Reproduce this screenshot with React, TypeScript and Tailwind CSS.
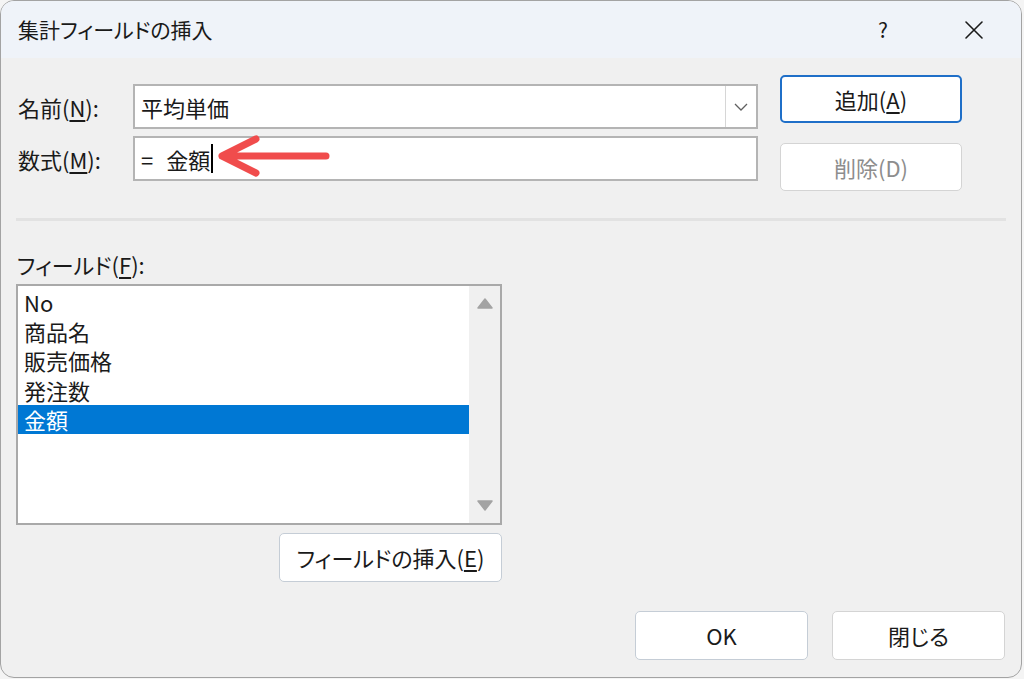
import React from "react";

const font = { fontFamily: '"Noto Sans CJK JP", "Noto Sans", sans-serif' };

function Btn({
  children,
  className = "",
}: {
  children: React.ReactNode;
  className?: string;
}) {
  return (
    <div
      className={
        "flex items-center justify-center bg-white rounded-[5px] text-[22px] text-[#1a1a1a] " +
        className
      }
    >
      {children}
    </div>
  );
}

export default function App() {
  const items = ["No", "商品名", "販売価格", "発注数", "金額"];
  return (
    <div
      className="w-[1024px] h-[679px] bg-[#f4f4f4] relative overflow-hidden [font-feature-settings:'palt']"
      style={font}
    >
      <div className="w-[1022px] h-[678px] border border-[#a3a3a3] rounded-[14px] overflow-hidden bg-[#f0f0f0] flex flex-col">
        {/* Title bar */}
        <div className="h-[57px] bg-[#eff3f9] flex items-center pl-[17px] pr-[37px] shrink-0">
          <div className="text-[21px] text-[#1a1a1a] leading-none">
            集計フィールドの挿入
          </div>
          <div className="ml-auto flex items-center">
            <span className="text-[21px] text-[#1a1a1a] leading-none mr-[76px]">
              ?
            </span>
            <svg width="20" height="20" viewBox="0 0 20 20">
              <path
                d="M2 2 L18 18 M18 2 L2 18"
                stroke="#1a1a1a"
                strokeWidth="1.6"
                strokeLinecap="round"
              />
            </svg>
          </div>
        </div>

        {/* Body */}
        <div className="flex-1 flex flex-col text-[#1a1a1a]">
          <div className="flex pl-[17px] pt-[17px]">
            <div className="flex flex-col gap-[7px] mt-[9px]">
              <div className="flex items-center">
                <div className="w-[115px] text-[22px] leading-none">
                  名前(<span className="underline underline-offset-[3px]">N</span>):
                </div>
                <div className="w-[625px] h-[45px] bg-white border-2 border-[#b4b4b4] flex items-center">
                  <div className="flex-1 pl-[6px] text-[22px] leading-none">
                    平均単価
                  </div>
                  <div className="w-[31px] h-full border-l border-[#d6d6d6] flex items-center justify-center">
                    <svg width="14" height="8" viewBox="0 0 14 8">
                      <path
                        d="M1 1 L7 7 L13 1"
                        stroke="#606060"
                        strokeWidth="1.3"
                        fill="none"
                      />
                    </svg>
                  </div>
                </div>
              </div>
              <div className="flex items-center">
                <div className="w-[115px] text-[22px] leading-none">
                  数式(<span className="underline underline-offset-[3px]">M</span>):
                </div>
                <div className="w-[625px] h-[45px] bg-white border-2 border-[#b4b4b4] flex items-center">
                  <div className="pl-[6px] text-[22px] leading-none flex items-center">
                    <span>=</span>
                    <span className="ml-[13px]">金額</span>
                    <span className="inline-block w-[1.5px] h-[29px] bg-black ml-[1px]"></span>
                  </div>
                </div>
              </div>
            </div>
            <div className="flex flex-col gap-[20px] ml-[22px]">
              <Btn className="w-[182px] h-[48px] border-2 border-[#1f6fc8]">
                追加(<span className="underline underline-offset-[3px]">A</span>)
              </Btn>
              <Btn className="w-[182px] h-[48px] border border-[#d4d4d4] !text-[#8d8d8d]">
                削除(D)
              </Btn>
            </div>
          </div>

          <div className="mx-[15px] mt-[27px] h-[3px] bg-[#e2e2e2]"></div>

          <div className="pl-[16px] mt-[32px] text-[22px] leading-none">
            フィールド(<span className="underline underline-offset-[3px]">F</span>):
          </div>

          <div className="ml-[15px] mt-[9px] w-[486px] h-[241px] bg-white border-2 border-[#a9a9a9] flex">
            <div className="flex-1 pt-[1px]">
              {items.map((it, i) => (
                <div
                  key={it}
                  className={
                    "h-[29.4px] flex items-center pl-[6px] text-[22px] leading-none " +
                    (i === 4 ? "bg-[#0078d4] text-white" : "")
                  }
                >
                  {it}
                </div>
              ))}
            </div>
            <div className="w-[31px] bg-[#f0f0f0] flex flex-col items-center justify-between pt-[12px] pb-[12px]">
              <svg width="16" height="11" viewBox="0 0 16 11">
                <path d="M8 1 L15 10 L1 10 Z" fill="#a3a3a3" stroke="#a3a3a3" strokeLinejoin="round" strokeWidth="1.5" />
              </svg>
              <svg width="16" height="11" viewBox="0 0 16 11">
                <path d="M1 1 L15 1 L8 10 Z" fill="#a3a3a3" stroke="#a3a3a3" strokeLinejoin="round" strokeWidth="1.5" />
              </svg>
            </div>
          </div>

          <div className="w-[501px] flex justify-end mt-[8px]">
            <Btn className="w-[223px] h-[49px] border border-[#c5cdd6]">
              フィールドの挿入(<span className="underline underline-offset-[3px]">E</span>)
            </Btn>
          </div>

          <div className="flex justify-end gap-[24px] pr-[16px] mt-[29px]">
            <Btn className="w-[173px] h-[49px] border border-[#c5cdd6]">OK</Btn>
            <Btn className="w-[173px] h-[49px] border border-[#d4d4d4]">閉じる</Btn>
          </div>
        </div>
      </div>

      {/* Red annotation arrow */}
      <svg
        className="absolute left-0 top-0 pointer-events-none"
        width="1024"
        height="679"
        viewBox="0 0 1024 679"
      >
        <path
          d="M326 156 L222 156 M256 139 L222 156 L256 173"
          stroke="#f04c4c"
          strokeWidth="7"
          strokeLinecap="round"
          strokeLinejoin="round"
          fill="none"
        />
      </svg>
    </div>
  );
}
